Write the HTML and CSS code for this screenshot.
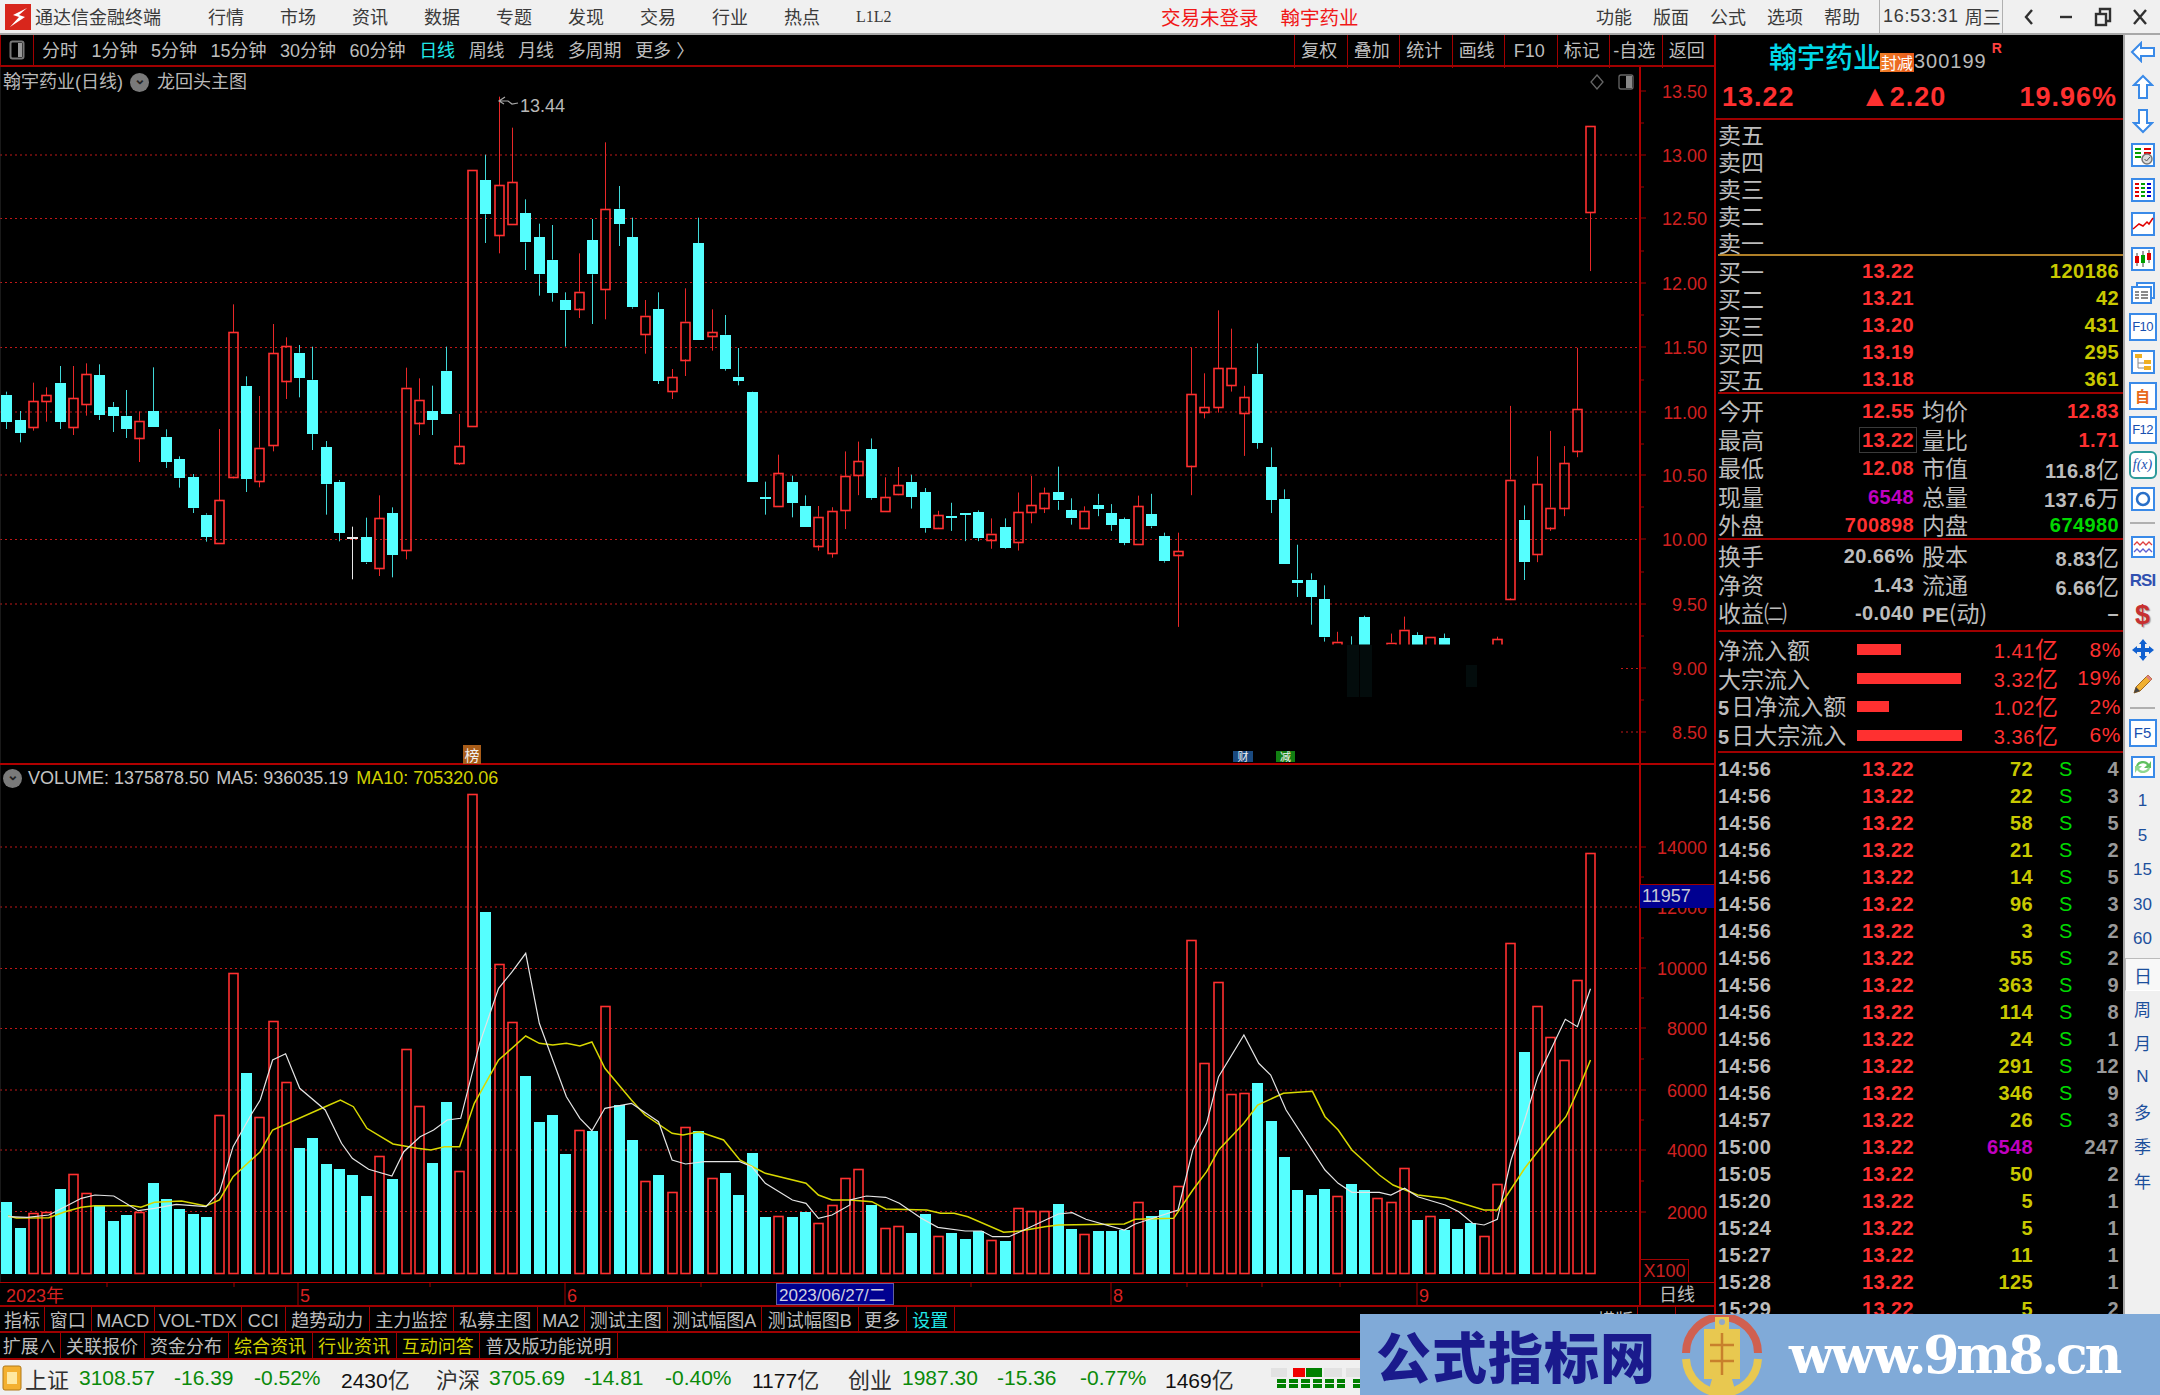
FILE: index.html
```html
<!DOCTYPE html>
<html lang="zh-CN">
<head>
<meta charset="utf-8">
<title>通达信金融终端</title>
<link rel="stylesheet" href="styles.css">
</head>
<body>
<div class="app">
  <header class="topbar">
    <div class="tb-left">
      <svg class="logo" width="26" height="26" viewBox="0 0 26 26"><rect width="26" height="26" fill="#d8261c"/><path d="M22 4 L8 11 L14 13 L5 23 L20 13 L14 11 Z" fill="#fff"/></svg>
      <span class="app-name">通达信金融终端</span>
      <nav class="tb-menu"><span>行情</span><span>市场</span><span>资讯</span><span>数据</span><span>专题</span><span>发现</span><span>交易</span><span>行业</span><span>热点</span><span>L1L2</span></nav>
    </div>
    <div class="tb-alert"><span>交易未登录</span><span>翰宇药业</span></div>
    <nav class="tb-tools"><span>功能</span><span>版面</span><span>公式</span><span>选项</span><span>帮助</span></nav>
    <div class="tb-clock"><span>16:53:31</span><span>周三</span></div>
    <div class="tb-win">
      <svg width="20" height="20" viewBox="0 0 20 20"><path d="M13 3 L7 10 L13 17" class="win-stroke"/></svg>
      <svg width="20" height="20" viewBox="0 0 20 20"><path d="M4 10 H16" class="win-stroke"/></svg>
      <svg width="20" height="20" viewBox="0 0 20 20"><rect x="3" y="7" width="10" height="11" class="win-stroke"/><path d="M7 6 V2 H17 V14 H14" class="win-stroke"/></svg>
      <svg width="20" height="20" viewBox="0 0 20 20"><path d="M4 3 L16 17 M16 3 L4 17" class="win-stroke"/></svg>
    </div>
  </header>

  <div class="body-row">
    <main class="chart-col">
      <div class="toolbar">
        <div class="tool-left">
          <span class="box-btn"><svg width="16" height="20" viewBox="0 0 16 20"><rect x="1.5" y="1.5" width="13" height="17" rx="2" fill="none" stroke="#777" stroke-width="2"/><rect x="9" y="3" width="4" height="14" fill="#999"/></svg></span>
          <div class="periods"><span>分时</span><span>1分钟</span><span>5分钟</span><span>15分钟</span><span>30分钟</span><span>60分钟</span><span class="cyan">日线</span><span>周线</span><span>月线</span><span>多周期</span><span>更多 〉</span></div>
        </div>
        <div class="tool-right"><span>复权</span><span>叠加</span><span>统计</span><span>画线</span><span>F10</span><span>标记</span><span>-自选</span><span>返回</span></div>
      </div>

      <section class="pane pane-price">
        <svg id="price" class="pane-svg" width="1714" height="698" viewBox="0 67 1714 698"></svg>
        <div class="pane-title"><span>翰宇药业(日线)</span><i class="chev">⌄</i><span>龙回头主图</span></div>
        <span class="flag flag-bang">榜</span>
        <span class="flag flag-cai">财</span>
        <span class="flag flag-jian">减</span>
      </section>

      <section class="pane pane-vol">
        <svg id="vol" class="pane-svg" width="1714" height="517" viewBox="0 765 1714 517"></svg>
        <div class="vol-title"><i class="chev">⌄</i><span>VOLUME: 1375878.50</span><span>MA5: 936035.19</span><span class="yellow">MA10: 705320.06</span></div>
        <span class="vol-cross">11957</span>
        <span class="vol-unit">X100</span>
      </section>

      <svg id="time" class="time-svg" width="1714" height="23" viewBox="0 1282 1714 23"></svg>

      <div class="tabs tabs-a"><span>指标</span><span>窗口</span><span>MACD</span><span>VOL-TDX</span><span>CCI</span><span>趋势动力</span><span>主力监控</span><span>私募主图</span><span>MA2</span><span>测试主图</span><span>测试幅图A</span><span>测试幅图B</span><span>更多</span><span class="cyan">设置</span><span class="blank"></span><span>横版</span><span>+</span><span></span></div>
      <div class="tabs tabs-b"><span>扩展∧</span><span>关联报价</span><span>资金分布</span><span class="yellow">综合资讯</span><span class="yellow">行业资讯</span><span class="yellow">互动问答</span><span>普及版功能说明</span><span class="blank"></span></div>
      <div class="tabs-gap"></div>

      <footer class="status">
        <svg width="20" height="26" viewBox="0 0 20 26"><rect x="1" y="1" width="18" height="24" rx="2" fill="#f4b030" stroke="#b07818"/><rect x="5" y="7" width="10" height="12" fill="#ffe8a0"/></svg>
        <span class="st-name">上证</span><b>3108.57</b><b>-16.39</b><b>-0.52%</b><em>2430<u>亿</u></em>
        <span class="st-name">沪深</span><b>3705.69</b><b>-14.81</b><b>-0.40%</b><em>1177<u>亿</u></em>
        <span class="st-name">创业</span><b>1987.30</b><b>-15.36</b><b>-0.77%</b><em>1469<u>亿</u></em>
        <svg class="st-mini" width="90" height="22" viewBox="0 0 90 22"><rect x="0" y="1" width="16" height="9" fill="#e2e2e2"/><rect x="22" y="1" width="12" height="9" fill="#f00000"/><rect x="35" y="1" width="16" height="9" fill="#008000"/><rect x="53" y="1" width="18" height="9" fill="#e2e2e2"/><rect x="75" y="1" width="15" height="9" fill="#e2e2e2"/><path d="M6 14 H74 M6 19 H74 M82 14 H90 M82 19 H90" stroke="#008000" stroke-width="4" stroke-dasharray="9 3"/></svg>
      </footer>
    </main>

    <aside class="panel">
      <div class="p-head">
        <div class="p-name"><span class="stock">翰宇药业</span><span class="seal">封减</span><span class="code">300199</span><sup class="r-mark">R</sup></div>
        <div class="p-price"><span>13.22</span><span class="chg"><i class="tri">▲</i>2.20</span><span class="pct">19.96%</span></div>
      </div>
      <div class="book asks">
        <div class="brow"><span>卖五</span></div>
        <div class="brow"><span>卖四</span></div>
        <div class="brow"><span>卖三</span></div>
        <div class="brow"><span>卖二</span></div>
        <div class="brow"><span>卖一</span></div>
      </div>
      <div class="book bids">
        <div class="brow"><span>买一</span><b class="red">13.22</b><b class="ylw">120186</b></div>
        <div class="brow"><span>买二</span><b class="red">13.21</b><b class="ylw">42</b></div>
        <div class="brow"><span>买三</span><b class="red">13.20</b><b class="ylw">431</b></div>
        <div class="brow"><span>买四</span><b class="red">13.19</b><b class="ylw">295</b></div>
        <div class="brow"><span>买五</span><b class="red">13.18</b><b class="ylw">361</b></div>
      </div>
      <div class="quote q1">
        <div class="qrow"><span>今开</span><b class="red">12.55</b><span class="l2">均价</span><b class="red">12.83</b></div>
        <div class="qrow"><span>最高</span><b class="red"><span class="hi-box">13.22</span></b><span class="l2">量比</span><b class="red">1.71</b></div>
        <div class="qrow"><span>最低</span><b class="red">12.08</b><span class="l2">市值</span><b class="gry">116.8<u>亿</u></b></div>
        <div class="qrow"><span>现量</span><b class="mag">6548</b><span class="l2">总量</span><b class="gry">137.6<u>万</u></b></div>
        <div class="qrow"><span>外盘</span><b class="red">700898</b><span class="l2">内盘</span><b class="grn">674980</b></div>
      </div>
      <div class="quote q2">
        <div class="qrow"><span>换手</span><b class="gry">20.66%</b><span class="l2">股本</span><b class="gry">8.83<u>亿</u></b></div>
        <div class="qrow"><span>净资</span><b class="gry">1.43</b><span class="l2">流通</span><b class="gry">6.66<u>亿</u></b></div>
        <div class="qrow"><span>收益㈡</span><b class="gry">-0.040</b><span class="l2"><b class="latin">PE</b>(动)</span><b class="gry">–</b></div>
      </div>
      <div class="flows">
        <div class="frow"><span>净流入额</span><i class="bar bar-a"></i><span class="fv">1.41<u>亿</u></span><span class="fp">8%</span></div>
        <div class="frow"><span>大宗流入</span><i class="bar bar-b"></i><span class="fv">3.32<u>亿</u></span><span class="fp">19%</span></div>
        <div class="frow"><span><b class="latin">5</b>日净流入额</span><i class="bar bar-c"></i><span class="fv">1.02<u>亿</u></span><span class="fp">2%</span></div>
        <div class="frow"><span><b class="latin">5</b>日大宗流入</span><i class="bar bar-d"></i><span class="fv">3.36<u>亿</u></span><span class="fp">6%</span></div>
      </div>
      <div class="trades" id="trades">
        <div class="trow"><b>14:56</b><b class="red">13.22</b><b class="ylw">72</b><b class="grn">S</b><b>4</b></div>
        <div class="trow"><b>14:56</b><b class="red">13.22</b><b class="ylw">22</b><b class="grn">S</b><b>3</b></div>
        <div class="trow"><b>14:56</b><b class="red">13.22</b><b class="ylw">58</b><b class="grn">S</b><b>5</b></div>
        <div class="trow"><b>14:56</b><b class="red">13.22</b><b class="ylw">21</b><b class="grn">S</b><b>2</b></div>
        <div class="trow"><b>14:56</b><b class="red">13.22</b><b class="ylw">14</b><b class="grn">S</b><b>5</b></div>
        <div class="trow"><b>14:56</b><b class="red">13.22</b><b class="ylw">96</b><b class="grn">S</b><b>3</b></div>
        <div class="trow"><b>14:56</b><b class="red">13.22</b><b class="ylw">3</b><b class="grn">S</b><b>2</b></div>
        <div class="trow"><b>14:56</b><b class="red">13.22</b><b class="ylw">55</b><b class="grn">S</b><b>2</b></div>
        <div class="trow"><b>14:56</b><b class="red">13.22</b><b class="ylw">363</b><b class="grn">S</b><b>9</b></div>
        <div class="trow"><b>14:56</b><b class="red">13.22</b><b class="ylw">114</b><b class="grn">S</b><b>8</b></div>
        <div class="trow"><b>14:56</b><b class="red">13.22</b><b class="ylw">24</b><b class="grn">S</b><b>1</b></div>
        <div class="trow"><b>14:56</b><b class="red">13.22</b><b class="ylw">291</b><b class="grn">S</b><b>12</b></div>
        <div class="trow"><b>14:56</b><b class="red">13.22</b><b class="ylw">346</b><b class="grn">S</b><b>9</b></div>
        <div class="trow"><b>14:57</b><b class="red">13.22</b><b class="ylw">26</b><b class="grn">S</b><b>3</b></div>
        <div class="trow"><b>15:00</b><b class="red">13.22</b><b class="mag">6548</b><b></b><b>247</b></div>
        <div class="trow"><b>15:05</b><b class="red">13.22</b><b class="ylw">50</b><b></b><b>2</b></div>
        <div class="trow"><b>15:20</b><b class="red">13.22</b><b class="ylw">5</b><b></b><b>1</b></div>
        <div class="trow"><b>15:24</b><b class="red">13.22</b><b class="ylw">5</b><b></b><b>1</b></div>
        <div class="trow"><b>15:27</b><b class="red">13.22</b><b class="ylw">11</b><b></b><b>1</b></div>
        <div class="trow"><b>15:28</b><b class="red">13.22</b><b class="ylw">125</b><b></b><b>1</b></div>
        <div class="trow"><b>15:29</b><b class="red">13.22</b><b class="ylw">5</b><b></b><b>2</b></div>
      </div>
    </aside>

    <nav class="sidebar">
      <span class="si"><svg width="26" height="22" viewBox="0 0 26 22"><path d="M2 11 L11 2 V7 H24 V15 H11 V20 Z" class="ic"/></svg></span>
      <span class="si"><svg width="22" height="26" viewBox="0 0 22 26"><path d="M11 2 L20 11 H15 V24 H7 V11 H2 Z" class="ic"/></svg></span>
      <span class="si"><svg width="22" height="26" viewBox="0 0 22 26"><path d="M11 24 L20 15 H15 V2 H7 V15 H2 Z" class="ic"/></svg></span>
      <span class="si"><svg width="24" height="24" viewBox="0 0 24 24"><rect x="1" y="1" width="22" height="22" class="ic"/><path d="M4 6 H10 M4 10 H10 M4 14 H10" stroke="#00a000" stroke-width="2"/><path d="M13 6 H20 M13 10 H20" stroke="#e00000" stroke-width="2"/><circle cx="16" cy="16" r="5" fill="#ddd" stroke="#777" stroke-width="1.5"/><path d="M13.5 16 L15.5 18 L19 14" stroke="#555" fill="none"/></svg></span>
      <span class="si"><svg width="24" height="24" viewBox="0 0 24 24"><rect x="1" y="1" width="22" height="22" class="ic"/><path d="M4 6 H8 M4 10 H8 M4 14 H8 M4 18 H8" stroke="#e00000" stroke-width="2"/><path d="M10 6 H14 M10 10 H14 M10 14 H14 M10 18 H14" stroke="#00a000" stroke-width="2"/><path d="M16 6 H20 M16 10 H20 M16 14 H20 M16 18 H20" stroke="#0000d0" stroke-width="2"/></svg></span>
      <span class="si"><svg width="24" height="24" viewBox="0 0 24 24"><rect x="1" y="1" width="22" height="22" class="ic"/><path d="M2 17 L8 12 L12 14 L16 10 L18 12 L22 6" stroke="#e00000" stroke-width="1.5" fill="none"/></svg></span>
      <span class="si"><svg width="24" height="24" viewBox="0 0 24 24"><rect x="1" y="1" width="22" height="22" class="ic"/><path d="M6 6 V19 M12 4 V20 M18 3 V16" stroke="#444"/><rect x="4" y="9" width="4" height="7" fill="#e00000"/><rect x="10" y="8" width="4" height="8" fill="#00a000"/><rect x="16" y="6" width="4" height="7" fill="#e00000"/></svg></span>
      <span class="si"><svg width="26" height="24" viewBox="0 0 26 24"><path d="M7 5 V2 H24 V17 H21" class="ic"/><rect x="2" y="6" width="19" height="16" class="ic"/><path d="M5 11 H9 M11 11 H18 M5 14 H9 M11 14 H18 M5 17 H9 M11 17 H18" stroke="#666" stroke-width="1.5"/></svg></span>
      <span class="si si-box si-f">F10</span>
      <span class="si"><svg width="24" height="24" viewBox="0 0 24 24"><rect x="1" y="1" width="22" height="22" class="ic"/><path d="M7 8 V18 H13 M7 13 H13" stroke="#888" fill="none"/><rect x="4" y="4" width="7" height="4" fill="#f0b020"/><rect x="13" y="10" width="7" height="4" fill="#f0b020"/><rect x="13" y="16" width="7" height="4" fill="#f0b020"/></svg></span>
      <span class="si si-box si-orange">自</span>
      <span class="si si-box si-f">F12</span>
      <span class="si si-box si-fx"><i>f(x)</i></span>
      <span class="si"><svg width="24" height="24" viewBox="0 0 24 24"><rect x="1" y="1" width="22" height="22" class="ic"/><circle cx="12" cy="12" r="6" fill="none" stroke="#2a70c8" stroke-width="2.5"/></svg></span>
      <span class="sep"></span>
      <span class="si"><svg width="24" height="22" viewBox="0 0 24 22"><rect x="1" y="1" width="22" height="20" class="ic"/><path d="M3 9 L6 6 L9 9 L12 6 L15 9 L18 6 L21 9" stroke="#e04040" fill="none" stroke-width="1.3"/><path d="M3 16 L6 13 L9 16 L12 13 L15 16 L18 13 L21 16" stroke="#6060d0" fill="none" stroke-width="1.3"/></svg></span>
      <span class="si si-rsi">RSI</span>
      <span class="si si-dollar">$</span>
      <span class="si"><svg width="24" height="24" viewBox="0 0 24 24"><path d="M12 1 L16 6 H14 V10 H18 V8 L23 12 L18 16 V14 H14 V18 H16 L12 23 L8 18 H10 V14 H6 V16 L1 12 L6 8 V10 H10 V6 H8 Z" fill="#1060d0"/></svg></span>
      <span class="si"><svg width="24" height="24" viewBox="0 0 24 24"><path d="M3 21 L5 15 L17 3 L21 7 L9 19 Z" fill="#f0b030" stroke="#a06820"/><path d="M17 3 L21 7 L19 9 L15 5 Z" fill="#e08080"/><path d="M3 21 L5 15 L9 19 Z" fill="#444"/></svg></span>
      <span class="sep sep-b"></span>
      <span class="si si-box">F5</span>
      <span class="si"><svg width="24" height="22" viewBox="0 0 24 22"><rect x="1" y="1" width="22" height="20" class="ic"/><path d="M5 10 A7 6 0 0 1 18 8 L20 5 V12 H13 L16 9 A5 4 0 0 0 7 11 Z" fill="#60c060"/><path d="M19 12 A7 6 0 0 1 6 14 L4 17 V10 H11 L8 13 A5 4 0 0 0 17 11 Z" fill="#90d890"/></svg></span>
      <span class="si si-t">1</span><span class="si si-t">5</span><span class="si si-t">15</span><span class="si si-t">30</span><span class="si si-t">60</span>
      <span class="si si-t si-active">日</span><span class="si si-t">周</span><span class="si si-t">月</span><span class="si si-t">N</span><span class="si si-t">多</span><span class="si si-t">季</span><span class="si si-t">年</span>
    </nav>
  </div>

  <aside class="banner">
    <span class="bn-title">公式指标网</span>
    <svg class="bn-logo" width="80" height="80" viewBox="0 0 80 80">
      <path d="M4 38 A36 36 0 0 1 76 38" fill="none" stroke="#d06050" stroke-width="8"/>
      <path d="M4 44 A36 36 0 0 0 40 78 A36 36 0 0 0 76 44" fill="none" stroke="#e8c850" stroke-width="8"/>
      <path d="M33 2 H47 V14 H58 V64 H50 L54 78 H26 L30 64 H22 V14 H33 Z" fill="#e8c850"/>
      <circle cx="40" cy="7" r="3" fill="#90a8c8"/>
      <path d="M40 18 V60 M28 30 H52 M28 46 H52" stroke="#c8802c" stroke-width="2.5"/>
    </svg>
    <span class="bn-url">www.9m8.cn</span>
  </aside>
</div>
<script src="app.js"></script>
</body>
</html>
```

FILE: styles.css
```css
* { box-sizing: border-box; }
html, body { margin: 0; padding: 0; background: #000; }
body { font-family: "Noto Sans CJK SC", "Liberation Sans", sans-serif; }
.app { position: relative; width: 2160px; height: 1395px; overflow: hidden; background: #000; }
i { font-style: normal; }
u { text-decoration: none; }

/* title bar */
.topbar { height: 35px; display: grid; grid-template-columns: 1161px 435px 283px 124px 1fr; align-items: center; background: #f0f0f0; border-bottom: 2px solid #a8a8a8; font-size: 18px; line-height: 33px; color: #3a3a3a; }
.tb-left { display: flex; align-items: center; padding-left: 5px; }
.logo { flex: none; }
.app-name { margin-left: 4px; width: 126px; white-space: nowrap; }
.tb-menu { display: flex; gap: 36px; margin-left: 47px; }
.tb-menu span { width: 36px; white-space: nowrap; }
.tb-menu span:last-child { font-family: "Liberation Serif", serif; font-size: 16px; }
.tb-alert { display: flex; gap: 22px; color: #f01818; font-size: 19.5px; }
.tb-tools { display: flex; gap: 21px; }
.tb-clock { display: flex; align-items: center; gap: 6px; height: 33px; padding-left: 3px; border-left: 1px solid #b0b0b0; border-right: 1px solid #b0b0b0; font-family: "Liberation Sans", sans-serif; }
.tb-clock span:first-child { letter-spacing: .7px; }
.tb-clock span:last-child { font-family: "Noto Sans CJK SC", sans-serif; }
.tb-win { display: flex; align-items: center; gap: 17px; padding-left: 16px; }
.win-stroke { fill: none; stroke: #303030; stroke-width: 2.4; }

.body-row { display: flex; height: 1360px; }
.chart-col { width: 1714px; flex: none; display: flex; flex-direction: column; }

/* chart toolbar */
.toolbar { height: 32px; display: flex; justify-content: space-between; background: #000; border-bottom: 2px solid #a00000; color: #bdbdbd; font-size: 18px; line-height: 33px; }
.tool-left { display: flex; }
.box-btn { width: 34px; display: flex; align-items: center; justify-content: center; border-left: 1px solid #a00000; border-right: 1px solid #a00000; }
.periods { display: flex; gap: 13.5px; margin-left: 8px; font-family: "Liberation Sans", "Noto Sans CJK SC", sans-serif; }
.periods span { white-space: nowrap; }
.tool-right { display: grid; grid-template-columns: repeat(8, 52.5px); font-family: "Liberation Sans", "Noto Sans CJK SC", sans-serif; }
.tool-right span { text-align: center; padding-right: 3px; border-left: 1px solid #a00000; white-space: nowrap; }
.cyan { color: #20e8e8; }
.yellow { color: #d0d000; }

/* chart panes */
.pane { position: relative; }
.pane-price { height: 698px; }
.pane-vol { height: 517px; }
.pane-svg { display: block; }
.pane-title { position: absolute; left: 3px; top: 3px; display: flex; align-items: center; gap: 7px; color: #b8b8b8; font-size: 18px; line-height: 24px; font-family: "Liberation Sans", "Noto Sans CJK SC", sans-serif; }
.pane-title span:last-child { margin-left: 1px; }
.chev { display: block; width: 19px; height: 19px; border-radius: 50%; background: #7a7a7a; color: #222; font-size: 14px; line-height: 12px; text-align: center; font-weight: bold; }
.vol-title { position: absolute; left: 3px; top: 1px; display: flex; align-items: center; gap: 6px; color: #c4c4c4; font-size: 18px; line-height: 24px; font-family: "Liberation Sans", sans-serif; white-space: nowrap; }
.vol-title span:nth-child(3) { margin-left: 1px; }
.vol-title span:nth-child(4) { margin-left: 2px; }
.flag { position: absolute; text-align: center; color: #f0f0f0; }
.flag-bang { left: 463px; top: 678px; width: 18px; height: 19px; font-size: 15px; line-height: 19px; background: #a85c18; }
.flag-cai { left: 1233px; top: 684px; width: 20px; height: 11px; font-size: 11px; line-height: 11px; background: #1a4a80; }
.flag-jian { left: 1276px; top: 684px; width: 19px; height: 11px; font-size: 11px; line-height: 11px; background: #128012; }
.vol-cross { position: absolute; left: 1640px; top: 119px; width: 74px; height: 24px; padding-left: 2px; background: #000090; border-top: 1px solid #a00000; color: #c8c8d8; font: 18px/23px "Liberation Sans", sans-serif; }
.vol-unit { position: absolute; left: 1640px; top: 494px; width: 49px; height: 23px; border: 1px solid #a00000; border-bottom: 0; color: #c82020; font: 18px/23px "Liberation Sans", sans-serif; text-align: center; }
.time-svg { display: block; flex: none; }

/* bottom tabs */
.tabs { display: grid; color: #bdbdbd; font-size: 18px; font-family: "Liberation Sans", "Noto Sans CJK SC", sans-serif; white-space: nowrap; border-top: 2px solid #a00000; }
.tabs span { text-align: center; border-right: 1px solid #a00000; overflow: hidden; }
.tabs .blank { border-right: 0; }
.tabs-a { height: 26px; line-height: 28px; grid-template-columns: 45px 46.6px 63.4px 86.7px 44.1px 84px 84px 84px 46.8px 83.3px 94px 96.8px 48.2px 48px 1fr 45px 38px 38px; }
.tabs-a span:last-child { border-right: 0; }
.tabs-b { height: 27px; line-height: 29px; grid-template-columns: 60.6px 84px 84px 84px 84px 83.3px 138px 1fr; }
.tabs-gap { height: 2px; flex: none; border-top: 2px solid #a00000; }

/* index status bar */
.status { height: 35px; flex: none; display: grid; grid-template-columns: 25px 54px 95px 80px 87px 95px 53px 95px 81px 87px 96px 54px 95px 83px 85px 97px 1fr; align-items: center; padding-left: 0; background: #f0f0f0; font-family: "Liberation Sans", sans-serif; font-size: 21px; }
.status > svg:first-child { margin-left: 2px; }
.status b { font-weight: normal; color: #0a8a0a; }
.status em { font-style: normal; color: #101010; }
.status u, .st-name { font-family: "Noto Sans CJK SC", sans-serif; font-size: 22px; color: #303030; }
.st-mini { margin-left: 9px; }

/* quote panel */
.panel { width: 409px; flex: none; height: 1360px; overflow: hidden; border-left: 2px solid #b00000; background: #000; color: #bcbcbc; font-size: 23px; padding-left: 2px; }
.panel b { font-family: "Liberation Sans", sans-serif; font-size: 20px; letter-spacing: .4px; font-weight: bold; }
.panel u { font-family: "Noto Sans CJK SC", sans-serif; font-size: 23px; font-weight: normal; letter-spacing: 0; }
.red { color: #ff3030; }
.ylw { color: #c8c800; }
.grn { color: #00d800; }
.mag { color: #c000c0; }
.gry { color: #bcbcbc; }
.p-head { height: 85px; border-bottom: 2px solid #a00000; margin-left: -2px; }
.p-name { height: 42px; display: flex; align-items: center; padding-left: 53px; }
.stock { width: 111px; font-size: 28px; line-height: 40px; color: #00d8e8; white-space: nowrap; font-weight: 500; }
.seal { width: 34px; height: 19px; margin-top: 12px; background: linear-gradient(90deg, #f08028, #e85818); color: #fff; font-size: 16px; line-height: 19px; text-align: center; white-space: nowrap; }
.code { margin-top: 9px; font: 20px/24px "Liberation Sans", sans-serif; letter-spacing: 1px; color: #b8b8b8; }
.r-mark { margin: -16px 0 0 5px; font: bold 14px/16px "Liberation Sans", sans-serif; color: #ff4040; }
.p-price { display: grid; grid-template-columns: 145px 150px 1fr; padding: 0 6px 0 6px; font: bold 27px/41px "Liberation Sans", sans-serif; letter-spacing: 1px; color: #ff3030; }
.chg { margin-left: -7px; white-space: nowrap; }
.tri { font-size: 30px; line-height: 20px; letter-spacing: 0; }
.pct { text-align: right; }
.book { border-bottom: 2px solid #a00000; }
.asks { height: 136px; border-bottom-color: #b08028; }
.bids { padding-top: 1px; height: 138px; }
.brow { height: 27px; line-height: 28px; display: grid; grid-template-columns: 60px 136px 1fr; padding-right: 4px; }
.brow b, .qrow b { text-align: right; }
.quote { border-bottom: 2px solid #a00000; }
.q1 { padding-top: 2px; height: 146px; }
.q2 { padding-top: 1px; height: 92px; }
.qrow { height: 28.5px; line-height: 30px; display: grid; grid-template-columns: 60px 136px 72px 1fr; padding-right: 4px; white-space: nowrap; }
.qrow span { line-height: 28.5px; }
.l2 { padding-left: 8px; }
.l2 .latin { text-align: left; letter-spacing: 0; }
.latin { font-family: "Liberation Sans", sans-serif; }
.qrow .hi-box { display: inline-block; border: 1px solid #3a3a3a; padding: 0 2px 0 2px; margin-right: -3px; line-height: 24px; }
.flows { height: 121px; padding-top: 2px; border-bottom: 2px solid #a00000; }
.frow { height: 28.5px; line-height: 28.5px; display: grid; grid-template-columns: 139px 110px 91px 1fr; align-items: center; padding-right: 2px; white-space: nowrap; }
.frow .latin { letter-spacing: 2px; }
.bar { display: block; height: 11px; background: #ff3030; }
.bar-a { width: 44px; }
.bar-b { width: 104px; }
.bar-c { width: 32px; }
.bar-d { width: 105px; }
.fv, .fp { text-align: right; color: #ff3030; font: 20px/28px "Liberation Sans", sans-serif; letter-spacing: .6px; }
.fp { font-size: 21px; }
.fv u { color: #ff3030; }
.trades { padding-top: 2px; }
.trow { height: 27px; line-height: 28px; display: grid; grid-template-columns: 60px 136px 119px 26px 1fr; padding-right: 4px; }
.trow b:nth-child(1), .trow b:nth-child(5) { color: #bcbcbc; }
.trow b:nth-child(2), .trow b:nth-child(3), .trow b:nth-child(5) { text-align: right; }
.trow b:nth-child(4) { grid-column: 4; margin-left: 26px; font-weight: normal; white-space: nowrap; }
.trow b:nth-child(5) { color: #999; }

/* right tool strip */
.sidebar { width: 37px; flex: none; display: flex; flex-direction: column; background: #f0f0f0; border-left: 2px solid #a8a8a8; }
.si { height: 34.4px; flex: none; display: flex; align-items: center; justify-content: center; }
.ic { fill: #fff; stroke: #3a8ae8; stroke-width: 2; }
.si-box { position: relative; isolation: isolate; font: 15px/24px "Liberation Sans", sans-serif; color: #1850b0; }
.si-f { font-size: 13px; letter-spacing: -.6px; }
.si-box::before { content: ""; position: absolute; width: 24px; height: 24px; background: #fff; border: 2px solid #3a8ae8; z-index: -1; }
.si-orange { color: #e86818; font-family: "Noto Sans CJK SC", sans-serif; font-weight: bold; }
.si-fx { font-size: 14px; }
.si-fx i { font-family: "Liberation Serif", serif; font-style: italic; }
.si-fx::before { border-color: #2a9a9a; border-radius: 6px; }
.si-rsi { font: bold 17px "Liberation Sans", sans-serif; color: #3050b0; letter-spacing: -1px; }
.si-dollar { font: bold 27px "Liberation Sans", sans-serif; color: #c83030; text-shadow: 1px 1px 1px #999; }
.si-t { font: 17px "Liberation Sans", "Noto Sans CJK SC", sans-serif; color: #1c4f9c; }
.si-active { margin-top: 2px; height: 33px; background: #f8f8f8; border: 1px solid #bbb; border-right: 0; border-bottom-color: #fff; font-size: 18px; }
.sep { flex: none; height: 13px; display: flex; align-items: center; padding: 0 5px; }
.sep::after { content: ""; flex: 1; height: 2px; background: #b0b0b0; }
.sep-b { height: 14px; }

/* watermark banner */
.banner { position: absolute; right: 0; bottom: 0; width: 800px; height: 81px; background: #80aad8; display: flex; align-items: center; }
.bn-title { margin-left: 16px; width: 281px; font-size: 55px; line-height: 81px; font-weight: 900; color: #1a1a8c; letter-spacing: 1px; white-space: nowrap; }
.bn-logo { margin-left: 25px; flex: none; }
.bn-url { margin-left: 27px; font: bold 52px/81px "DejaVu Serif", serif; color: #fff; white-space: nowrap; letter-spacing: -3.2px; }

/* svg chart classes */
.grid-dot { stroke: #c01818; stroke-dasharray: 2 3; stroke-width: 1; }
.axis { stroke: #b00000; stroke-width: 2; }
.tick { stroke: #a00000; stroke-width: 1; }
.ax-txt { fill: #d02020; font: 18px "Liberation Sans", sans-serif; text-anchor: end; }
.up { fill: none; stroke: #ff3030; stroke-width: 1.6; }
.wick-up { stroke: #e82828; stroke-width: 1; }
.down { fill: #55ffff; }
.wick-down { stroke: #40d8d8; stroke-width: 1; }
.flat { fill: #e8e8e8; }
.wick-flat { stroke: #e8e8e8; stroke-width: 1; }
.mask { fill: #000; }
.ghost { fill: #030c0c; }
.ma5 { fill: none; stroke: #e4e4e4; stroke-width: 1.2; }
.ma10 { fill: none; stroke: #d8d800; stroke-width: 1.5; }
.peak { fill: #b8b8b8; font: 18px "Liberation Sans", sans-serif; }
.peak-arrow { fill: none; stroke: #a8a8a8; stroke-width: 1.2; }
.sm-icon { fill: none; stroke: #666; stroke-width: 1.3; }
.time-txt { fill: #d82020; font: 18px "Liberation Sans", "Noto Sans CJK SC", sans-serif; }
.time-date { fill: #000090; stroke: #6060a0; }
.time-date-txt { fill: #d0d0e0; font: 17px "Liberation Sans", "Noto Sans CJK SC", sans-serif; }
.time-unit { fill: #bcbcbc; font: 18px "Noto Sans CJK SC", sans-serif; text-anchor: middle; }
```

FILE: app.js
```js
var NS = 'http://www.w3.org/2000/svg';
function el(parent, tag, attrs, text) {
  var n = document.createElementNS(NS, tag);
  for (var k in attrs) n.setAttribute(k, attrs[k]);
  if (text !== undefined) n.textContent = text;
  parent.appendChild(n);
  return n;
}
function cx(i) { return Math.round(6.3 + 13.31 * i) + 0.5; }

/* candles: [kind, wickTop, bodyTop, bodyBottom, wickBottom]; A read at y = 80 + v/3 */
var A = [['c',935,944,1024,1047],['c',993,1021,1060,1087],['r',908,964,1041,1052],['r',922,946,964,1025],['c',858,908,1024,1047],['r',858,955,1041,1065],['r',850,882,973,1007],['c',853,886,1006,1020],['c',966,980,1006,1056],['c',930,1007,1047,1074],['r',994,1022,1073,1146],['c',862,994,1042,1042],['c',1048,1070,1146,1164],['c',1129,1138,1195,1223],['c',1182,1192,1285,1299],['c',1300,1304,1371,1385],['r',1047,1260,1388,1388],['r',673,756,1190,1195],['c',889,917,1195,1236],['r',948,1103,1203,1222],['r',732,820,1095,1114],['r',772,797,902,957],['c',795,818,893,952],['c',800,899,1060,1110],['c',1083,1102,1213,1304],['c',1200,1205,1357,1384],['w',1340,1372,1376,1498],['c',1313,1372,1448,1452],['r',1246,1314,1464,1488],['c',1282,1300,1425,1492],['r',863,923,1410,1438],['r',895,959,1027,1065],['c',917,994,1020,1065],['c',800,872,1002,1002],['r',1002,1098,1149,1155],['r',270,270,1037,1037],['c',224,300,403,489],['r',50,315,465,520],['r',143,306,433,433],['c',358,400,488,570],['c',431,472,583,647],['c',435,539,637,665],['c',637,661,691,800],['r',520,635,685,714],['c',417,481,583,732],['r',187,387,627,718],['c',318,386,430,498],['c',413,472,682,686],['r',660,707,762,821],['c',637,688,903,912],['r',867,891,933,957],['r',625,725,838,888],['c',413,490,780,780],['r',688,756,767,812],['c',705,764,867,872],['c',804,890,903,916],['c',934,935,1204,1204],['c',1205,1251,1258,1304],['r',1124,1180,1280,1280],['c',1187,1205,1267,1312],['c',1246,1277,1339,1339],['r',1278,1310,1396,1412]];
/* B read at y = 80 + v/2.24 */
var B = [['r',957,965,1060,1070],['r',832,888,965,1006],['r',810,854,885,930],['c',803,827,937,940],['r',890,935,966,966],['r',867,908,929,930],['c',884,900,933,960],['c',914,924,1004,1014],['r',965,975,1003,1004],['c',947,976,980,1010],['c',970,970,973,1033],['c',964,968,1026,1033],['r',982,1016,1029,1050],['c',982,1001,1047,1050],['r',924,968,1035,1054],['r',887,952,968,993],['r',913,925,958,970],['c',866,924,943,963],['c',937,964,983,996],['r',955,965,1003,1004],['c',927,951,960,977],['c',950,971,997,1010],['c',980,984,1037,1042],['r',931,955,1040,1040],['c',927,973,1000,1004],['c',1014,1021,1078,1081],['r',1014,1055,1063,1225],['r',600,703,864,930],['r',657,733,744,758],['r',516,646,734,745],['r',557,646,683,698],['r',685,710,746,842],['c',590,658,812,826],['c',823,867,940,970],['c',917,938,1084,1084],['c',1041,1119,1125,1158],['c',1105,1119,1158,1220],['c',1132,1163,1249,1258],['r',1236,1258,1400,1400],['c',1246,1400,1401,1401],['c',1200,1203,1400,1400],null,['r',1240,1260,1400,1400],['r',1202,1231,1400,1400],['c',1237,1243,1400,1400],['r',1247,1247,1400,1400],['c',1240,1250,1400,1400],null,null,null,['r',1247,1253,1400,1400],['r',730,895,1161,1165],['c',953,985,1080,1120],['r',843,905,1062,1080],['r',786,958,1002,1010],['r',820,858,958,977],['r',600,737,830,845],['r',296,104,296,428]];

var VA = ['c1326','c1403','r1358','r1355','c1286','r1241','r1300','c1338','c1384','c1366','r1355','c1268','c1316','c1348','c1362','c1371','r1066','r638','c938','r1070','r782','r967','c1163','c1133','c1213','c1226','c1245','c1308','r1187','c1258','r868','r1039','c1208','c1025','r1232','r102','c457','r611','r787','c947','c1087','c1064','c1181','r1111','c1114','r737','c1034','c1141','r1264','c1245','r1295','r1102','c1114','r1255','c1240','c1304','c1178','c1371','r1367','c1371','c1357','r1390','r1336','r1255','r1228','c1335','r1404','r1399','c1420','c1362','r1427','c1420','c1438','c1413','r1440','c1443','r1345','r1354','r1354','c1331','c1407','r1421','c1412','c1412','c1410','r1327','c1367','c1349','r1278','r539','r908','r665','r1003','r999','c970','c1083','c1191','c1291','c1304','c1286','r1309','c1272','c1290','r1314','r1327','r1224','c1380','r1368','c1376','c1407','c1388','r1427','r1273','r548','c876','r737','r832','r900','r661','r279'];

var W1 = '15,1370 50,1372 90,1365 120,1340 150,1315 175,1305 210,1308 255,1352 285,1345 325,1333 380,1340 405,1295 430,1160 465,1060 480,1020 503,900 527,881 553,985 600,1050 630,1150 650,1195 680,1228 723,1248 745,1175 775,1130 800,1110 825,1080 850,1075 885,850 920,685 945,635 970,580 995,790 1020,900 1045,1010 1070,1075 1092,1112 1116,1045 1165,1030 1215,1085 1240,1200 1265,1212 1300,1205 1365,1205 1387,1220 1412,1270 1462,1320 1487,1330 1510,1375 1535,1365 1568,1335';
var Y1 = '15,1368 30,1374 90,1373 120,1355 150,1342 175,1337 245,1337 260,1342 285,1327 335,1323 380,1338 405,1320 430,1250 480,1175 503,1110 600,1040 628,1020 652,1040 677,1105 725,1152 770,1165 795,1170 820,1160 848,1160 875,1030 920,900 970,828 995,850 1020,855 1045,850 1070,858 1092,846 1116,925 1165,1020 1190,1065 1240,1120 1260,1125 1290,1115 1335,1140 1365,1200 1412,1240 1487,1270 1510,1305 1535,1320 1568,1320';
var W2 = '0,1320 30,1308 65,1312 90,1330 130,1375 160,1402 210,1413 240,1413 260,1430 290,1430 330,1400 380,1362 405,1358 430,1378 500,1410 520,1392 598,1350 625,1170 650,1090 672,950 718,825 745,910 767,945 795,1050 866,1230 890,1270 915,1297 965,1297 986,1305 1011,1285 1035,1310 1085,1335 1110,1355 1135,1390 1156,1395 1180,1378 1205,1200 1230,1080 1254,950 1304,778 1326,800 1350,686';
var Y2 = '0,1320 40,1325 65,1347 140,1350 165,1360 190,1360 215,1370 280,1417 310,1413 355,1400 380,1395 500,1392 520,1378 590,1375 625,1290 650,1235 672,1170 718,1090 743,1035 790,1000 843,994 866,1070 890,1110 915,1170 965,1245 990,1275 1035,1305 1085,1315 1156,1350 1180,1350 1230,1225 1280,1120 1305,1070 1330,980 1350,900';

function pts(str, fx) {
  return str.split(' ').map(function (p) {
    var a = p.split(',');
    return fx(+a[0]).toFixed(1) + ',' + (760 + a[1] / 3).toFixed(1);
  }).join(' ');
}

function drawCandle(g, i, row, f) {
  if (!row) return;
  var x = cx(i), k = row[0], top = f(row[1]), bt = f(row[2]), bb = f(row[3]), wb = f(row[4]);
  var wc = k === 'r' ? 'wick-up' : k === 'w' ? 'wick-flat' : 'wick-down';
  if (bt > top) el(g, 'line', { x1: x, x2: x, y1: top, y2: bt, 'class': wc });
  if (wb > bb) el(g, 'line', { x1: x, x2: x, y1: bb, y2: wb, 'class': wc });
  if (k === 'r') el(g, 'rect', { x: x - 4.5, y: Math.round(bt) + 0.5, width: 9, height: Math.max(2, Math.round(bb - bt)), 'class': 'up' });
  else el(g, 'rect', { x: x - 5.5, y: Math.round(bt), width: 11, height: Math.max(2, Math.round(bb - bt)), 'class': k === 'w' ? 'flat' : 'down' });
}

var AX = 1640;
function axisLabels(svg, rows) {
  rows.forEach(function (r) {
    el(svg, 'line', { x1: AX, x2: AX + 6, y1: r[0], y2: r[0], 'class': 'tick' });
    el(svg, 'text', { x: 1707, y: r[0] + 6.5, 'class': 'ax-txt' }, r[1]);
  });
  for (var i = 0; i + 1 < rows.length; i++) {
    var m = Math.round((rows[i][0] + rows[i + 1][0]) / 2);
    el(svg, 'line', { x1: AX, x2: AX + 4, y1: m, y2: m, 'class': 'tick' });
  }
}

/* price pane */
var price = document.getElementById('price');
[155, 218.5, 282.5, 347.5, 412, 475, 539.5, 604].forEach(function (y) {
  el(price, 'line', { x1: 0, x2: AX, y1: y, y2: y, 'class': 'grid-dot' });
});
[668.5, 732].forEach(function (y) {
  el(price, 'line', { x1: 1621, x2: AX, y1: y, y2: y, 'class': 'grid-dot' });
});
var c1 = el(price, 'g', {});
A.forEach(function (r, i) { drawCandle(c1, i, r, function (v) { return 80 + v / 3; }); });
B.forEach(function (r, i) { drawCandle(c1, i + 62, r, function (v) { return 80 + v / 2.24; }); });
el(price, 'rect', { x: 0, y: 644.5, width: 1620, height: 118, 'class': 'mask' });
el(price, 'rect', { x: 1347, y: 645, width: 12, height: 52, 'class': 'ghost' });
el(price, 'rect', { x: 1360, y: 645, width: 12, height: 52, 'class': 'ghost' });
el(price, 'rect', { x: 1466, y: 665, width: 11, height: 22, 'class': 'ghost' });
el(price, 'path', { d: 'M505 97 L499 101 L504 104 M499 101 L508 101 L512 104 L518 103', 'class': 'peak-arrow' });
el(price, 'text', { x: 520, y: 112, 'class': 'peak' }, '13.44');
el(price, 'path', { d: 'M1597 75 L1603 82 L1597 89 L1591 82 Z', 'class': 'sm-icon' });
el(price, 'rect', { x: 1619, y: 75, width: 14, height: 14, rx: 2, 'class': 'sm-icon' });
el(price, 'rect', { x: 1626, y: 76, width: 6, height: 12, fill: '#888' });
el(price, 'line', { x1: 0, x2: 0, y1: 67, y2: 764, stroke: '#333' });
el(price, 'line', { x1: AX, x2: AX, y1: 67, y2: 765, 'class': 'axis' });
el(price, 'line', { x1: 0, x2: 1714, y1: 764, y2: 764, 'class': 'axis' });
axisLabels(price, [[91, '13.50'], [155, '13.00'], [218, '12.50'], [283, '12.00'], [347, '11.50'], [412, '11.00'], [475, '10.50'], [539, '10.00'], [604, '9.50'], [668, '9.00'], [732, '8.50']]);

/* volume pane */
var vol = document.getElementById('vol');
[847, 907, 968.5, 1028.5, 1090, 1150, 1211.5].forEach(function (y) {
  el(vol, 'line', { x1: 0, x2: AX, y1: y, y2: y, 'class': 'grid-dot' });
});
var BASE = 1273;
VA.forEach(function (s, i) {
  var x = cx(i), t = Math.round(760 + (+s.slice(1)) / 3);
  if (s[0] === 'r') el(vol, 'rect', { x: x - 4.5, y: t + 0.5, width: 9, height: BASE - t, 'class': 'up' });
  else el(vol, 'rect', { x: x - 5.5, y: t, width: 11, height: BASE + 1 - t, 'class': 'down' });
});
var fx1 = function (z) { return z / 1.845; }, fx2 = function (z) { return 850 + z / 1.823; };
el(vol, 'polyline', { points: pts(Y1, fx1) + ' ' + pts(Y2, fx2), 'class': 'ma10' });
el(vol, 'polyline', { points: pts(W1, fx1) + ' ' + pts(W2, fx2), 'class': 'ma5' });
el(vol, 'line', { x1: 0, x2: 0, y1: 765, y2: 1282, stroke: '#333' });
el(vol, 'line', { x1: AX, x2: AX, y1: 765, y2: 1282, 'class': 'axis' });
axisLabels(vol, [[847, '14000'], [907, '12000'], [968, '10000'], [1028, '8000'], [1090, '6000'], [1150, '4000'], [1212, '2000']]);

/* time axis */
var tm = document.getElementById('time');
el(tm, 'line', { x1: 0, x2: 1714, y1: 1282, y2: 1282, 'class': 'axis' });
[107, 234, 430, 701, 971, 1187, 1262, 1340].forEach(function (x) {
  el(tm, 'line', { x1: x, x2: x, y1: 1283, y2: 1287, 'class': 'tick' });
});
el(tm, 'text', { x: 6, y: 1302, 'class': 'time-txt' }, '2023年');
[[298, '5'], [565, '6'], [1111, '8'], [1417, '9']].forEach(function (m) {
  el(tm, 'line', { x1: m[0], x2: m[0], y1: 1283, y2: 1305, 'class': 'tick' });
  el(tm, 'text', { x: m[0] + 2, y: 1302, 'class': 'time-txt' }, m[1]);
});
el(tm, 'rect', { x: 776.5, y: 1283.5, width: 117, height: 21, 'class': 'time-date' });
el(tm, 'text', { x: 779, y: 1301, 'class': 'time-date-txt' }, '2023/06/27/二');
el(tm, 'line', { x1: AX, x2: AX, y1: 1283, y2: 1305, 'class': 'axis' });
el(tm, 'text', { x: 1677, y: 1301, 'class': 'time-unit' }, '日线');
```
